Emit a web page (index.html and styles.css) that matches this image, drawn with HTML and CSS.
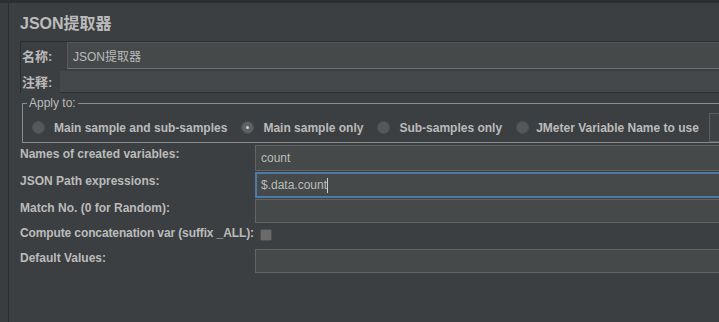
FILE: index.html
```html
<!DOCTYPE html>
<html lang="zh-CN">
<head>
  <meta charset="UTF-8">
  <meta name="viewport" content="width=device-width, initial-scale=1.0">
  <title>JSON提取器</title>
  <link rel="stylesheet" href="styles.css">
</head>
<body>
  <div id="app">
    <div id="gutter"></div>
    <div id="main">
      <h1 id="title">JSON提取器</h1>

      <div id="name-box">
        <div class="name-row">
          <span class="cjk-label">名称:</span>
          <div class="field name-field">JSON提取器</div>
        </div>
        <div class="comment-row">
          <span class="cjk-label">注释:</span>
          <div class="comment-field"></div>
        </div>
      </div>

      <fieldset id="apply-to">
        <legend>Apply to:</legend>
        <label class="radio"><span class="dot"></span>Main sample and sub-samples</label>
        <label class="radio checked"><span class="dot"></span>Main sample only</label>
        <label class="radio"><span class="dot"></span>Sub-samples only</label>
        <label class="radio last"><span class="dot"></span>JMeter Variable Name to use</label>
        <div class="field var-field"></div>
      </fieldset>

      <div id="form">
        <div class="label">Names of created variables:</div>
        <div class="field">count</div>

        <div class="label">JSON Path expressions:</div>
        <div class="field focused"><span class="caret">$.data.count</span></div>

        <div class="label">Match No. (0 for Random):</div>
        <div class="field"></div>

        <div class="label tight">Compute concatenation var (suffix _ALL):</div>
        <div class="check-cell"><span class="checkbox"></span></div>

        <div class="label">Default Values:</div>
        <div class="field"></div>
      </div>
    </div>
  </div>
</body>
</html>
```

FILE: styles.css
```css
* {
  box-sizing: border-box;
}

:root {
  --panel-bg: #3c3f41;
  --gutter-bg: #3a3d3f;
  --edge: #2b2d2f;
  --fg: #bbbbbb;
  --field-bg: #45494a;
  --field-border: #646464;
  --line: #8a8c8e;
  --focus: #4f7aa6;
}

html, body {
  height: 100%;
  margin: 0;
  overflow: hidden;
  background: var(--panel-bg);
  color: var(--fg);
  font-family: "Liberation Sans", Arial, "Noto Sans CJK SC", sans-serif;
  font-size: 12px;
}

#app {
  display: flex;
  height: 100%;
  border-top: 3px solid var(--edge);
}

#gutter {
  width: 9px;
  background: var(--gutter-bg);
  border-right: 1px solid var(--edge);
}

#main {
  flex: 1;
  margin-right: -30px;
  padding-left: 11px;
  display: flex;
  flex-direction: column;
}

#title {
  margin: 10px 0 6px;
  font-size: 16px;
  font-weight: bold;
  line-height: 22px;
}

/* name / comment block */
#name-box {
  border-top: 1px solid var(--edge);
  border-left: 1px solid var(--edge);
}

.name-row,
.comment-row {
  display: flex;
  align-items: center;
}

.cjk-label {
  font-weight: bold;
  padding-left: 1px;
  font-size: 13px;
}

.name-row .cjk-label {
  width: 46px;
}

.comment-row .cjk-label {
  width: 39px;
}

.field {
  background: var(--field-bg);
  border: 1px solid var(--field-border);
  border-right: none;
  padding: 0 5px;
  display: flex;
  align-items: center;
  font-size: 12px;
}

.name-field {
  flex: 1;
  height: 27px;
  border-top-color: #56595b;
  border-left-color: #56595b;
  border-bottom-color: #6e7072;
}

.comment-field {
  flex: 1;
  height: 22px;
  margin-top: 2px;
  background: #45484a;
  border-bottom: 1px solid var(--edge);
}

/* apply to */
#apply-to {
  margin: 3px 0 0 2px;
  padding: 3px 0 0 9px;
  border: 1px solid var(--line);
  border-right: none;
  display: flex;
  align-items: center;
}

#apply-to legend {
  padding: 0 2px;
  margin-left: -5px;
  line-height: 14px;
}

.radio {
  display: flex;
  align-items: center;
  font-weight: bold;
  margin-right: 14px;
  white-space: nowrap;
}

.radio.last {
  margin-right: 10px;
}

.dot {
  width: 13px;
  height: 13px;
  border-radius: 50%;
  background: #55585a;
  border: 1px solid #4d5052;
  margin-right: 9px;
  position: relative;
}

.radio.last .dot {
  margin-right: 7px;
}

.radio.checked .dot {
  background: #5e6163;
}

.radio.checked .dot::after {
  content: "";
  position: absolute;
  left: 4px;
  top: 4px;
  width: 3px;
  height: 3px;
  border-radius: 50%;
  background: #d0d0d0;
}

.var-field {
  flex: 1;
  height: 29px;
  background: #3f4244;
  border-color: #5a5d5f;
}

/* form rows */
#form {
  margin-top: 2px;
  display: grid;
  grid-template-columns: 235px 1fr;
  grid-template-rows: 26px 26px 24px 24px 24px;
  row-gap: 1px;
}

#form .label {
  font-weight: bold;
  padding-top: 2px;
  white-space: nowrap;
}

#form .label.tight {
  letter-spacing: -0.12px;
}

#form .field {
  height: 100%;
}

#form .field.focused {
  border: 2px solid var(--focus);
  border-right: none;
  padding-left: 4px;
}

.caret {
  border-right: 1px solid #d0d0d0;
  line-height: 15px;
}

.check-cell {
  display: flex;
  align-items: flex-start;
  padding: 5px 0 0 5px;
}

.checkbox {
  width: 12px;
  height: 12px;
  border-radius: 2px;
  background: #6b6b6b;
  border: 1px solid #4e5153;
}
```
